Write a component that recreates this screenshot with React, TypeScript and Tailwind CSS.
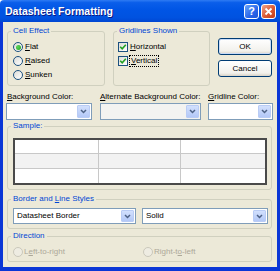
import React from "react";

function Radio({ checked = false, disabled = false }: { checked?: boolean; disabled?: boolean }) {
  return (
    <span
      className={
        disabled
          ? "w-[10px] h-[10px] shrink-0 rounded-full border border-[#CAC8BB] bg-[#EEECE2] flex items-center justify-center"
          : "w-[10px] h-[10px] shrink-0 rounded-full border border-[#1C5180] bg-[linear-gradient(135deg,#DCDCD7,#FFFFFF)] flex items-center justify-center"
      }
    >
      {checked && <span className="w-[5px] h-[5px] rounded-full bg-[radial-gradient(circle_at_35%_35%,#5CD65C,#21A121)]" />}
    </span>
  );
}

function Check() {
  return (
    <span className="w-[10px] h-[10px] shrink-0 border border-[#1C5180] bg-[linear-gradient(135deg,#DCDCD7,#FFFFFF)] flex items-center justify-center">
      <svg viewBox="0 0 8 8" className="w-[8px] h-[8px]">
        <path d="M1.2 3.8 L3.2 5.8 L6.8 1.8" fill="none" stroke="#21A121" strokeWidth="1.6" />
      </svg>
    </span>
  );
}

function Arrow() {
  return (
    <span className="w-[13px] self-stretch m-[1px] rounded-[1px] border border-[#B9CCF5] bg-[linear-gradient(#D2E0FD,#B3C8F7)] flex items-center justify-center">
      <svg viewBox="0 0 7 5" className="w-[7px] h-[5px]">
        <path d="M1 1 L3.5 3.5 L6 1" fill="none" stroke="#4D6185" strokeWidth="1.5" />
      </svg>
    </span>
  );
}

function Combo({ className, value, fill = "bg-white" }: { className: string; value?: string; fill?: string }) {
  return (
    <div className={`flex items-stretch border border-[#7F9DB9] ${fill} ${className}`}>
      <span className="flex-1 pl-[3px] flex items-center text-black">{value}</span>
      <Arrow />
    </div>
  );
}

export default function App() {
  return (
    <div className="w-[280px] h-[271px] flex flex-col font-['Liberation_Sans',Arial,sans-serif] text-[8px] leading-[10px] text-black">
      {/* Title bar */}
      <div className="h-[22px] shrink-0 flex items-center pl-[5px] pr-[4px] rounded-t-[4px] bg-[linear-gradient(#2E7BF3_0%,#0A5EEA_12%,#0055E5_45%,#0052E0_80%,#0046D2_100%)]">
        <span className="flex-1 text-white font-bold text-[10.5px] leading-[12px] [text-shadow:1px_1px_#0A1883]">
          Datasheet Formatting
        </span>
        <span className="w-[15px] h-[15px] rounded-[3px] border border-white bg-[linear-gradient(135deg,#6AA5FA,#2966EA_60%,#1F56D8)] flex items-center justify-center text-white font-bold text-[11px] leading-none">
          ?
        </span>
        <span className="ml-[2px] w-[15px] h-[15px] rounded-[3px] border border-white bg-[linear-gradient(135deg,#EFA48C,#DC5A33_55%,#C23C17)] flex items-center justify-center">
          <svg viewBox="0 0 9 9" className="w-[9px] h-[9px]">
            <path d="M1.5 1.5 L7.5 7.5 M7.5 1.5 L1.5 7.5" stroke="white" strokeWidth="1.8" />
          </svg>
        </span>
      </div>

      {/* Body */}
      <div className="flex-1 flex flex-col bg-[#ECE9D8] border-x-[3px] border-b-[4px] border-[#0A36D6] px-[3px]">
        {/* Top row */}
        <div className="flex pt-[4px]">
          <fieldset className="ml-[1px] w-[98px] h-[60px] border border-[#D0D0BF] rounded-[3px] pl-[5px]">
            <legend className="ml-[-2px] px-[2px] text-[#0046D5]">Cell Effect</legend>
            <div className="flex flex-col pt-[4px]">
              <label className="h-[14px] flex items-center gap-[2px]">
                <Radio checked />
                <span>
                  <u>F</u>lat
                </span>
              </label>
              <label className="h-[14px] flex items-center gap-[2px]">
                <Radio />
                <span>
                  <u>R</u>aised
                </span>
              </label>
              <label className="h-[14px] flex items-center gap-[2px]">
                <Radio />
                <span>
                  <u>S</u>unken
                </span>
              </label>
            </div>
          </fieldset>

          <fieldset className="ml-[8px] w-[97px] h-[60px] border border-[#D0D0BF] rounded-[3px] pl-[4px]">
            <legend className="ml-[-1px] px-[2px] text-[#0046D5]">Gridlines Shown</legend>
            <div className="flex flex-col pt-[4px]">
              <label className="h-[14px] flex items-center gap-[2px]">
                <Check />
                <span>
                  <u>H</u>orizontal
                </span>
              </label>
              <label className="h-[14px] flex items-center gap-[1px]">
                <Check />
                <span className="border border-dotted border-black px-[1px]">
                  <u>V</u>ertical
                </span>
              </label>
            </div>
          </fieldset>

          <div className="ml-[8px] flex flex-col gap-[5px] pt-[12px]">
            <button className="w-[54px] h-[17px] rounded-[3px] border border-[#003C74] bg-[linear-gradient(#FFFFFF,#F2F1EC_80%,#D8D2C6)] shadow-[inset_0_0_0_1px_#C9DBF7] text-[8px] leading-none">
              OK
            </button>
            <button className="w-[54px] h-[17px] rounded-[3px] border border-[#003C74] bg-[linear-gradient(#FFFFFF,#F2F1EC_80%,#D8D2C6)] text-[8px] leading-none">
              Cancel
            </button>
          </div>
        </div>

        {/* Colour pickers */}
        <div className="flex mt-[6px]">
          <div className="flex flex-col w-[86px]">
            <span className="pl-[1px]">
              <u>B</u>ackground Color:
            </span>
            <Combo className="mt-[1px] h-[17px]" />
          </div>
          <div className="flex flex-col w-[101px] ml-[8px]">
            <span>
              <u>A</u>lternate Background Color:
            </span>
            <Combo className="mt-[1px] h-[17px]" fill="bg-[#F3F3F1]" />
          </div>
          <div className="flex flex-col w-[65px] ml-[7px]">
            <span>
              <u>G</u>ridline Color:
            </span>
            <Combo className="mt-[1px] h-[17px]" />
          </div>
        </div>

        {/* Sample */}
        <fieldset className="mt-[1px] ml-[1px] w-[265px] h-[69px] border border-[#D0D0BF] rounded-[3px] pl-[5px]">
          <legend className="ml-[-2px] px-[2px] text-[#0046D5]">Sample:</legend>
          <div className="mt-[7px] w-[254px] h-[47px] border-2 border-[#4A4A4A] grid grid-cols-[84px_1fr_84px] grid-rows-3 bg-white">
            <div className="border-r border-b border-[#C8C8C8] bg-white" />
            <div className="border-r border-b border-[#C8C8C8] bg-white" />
            <div className="border-b border-[#C8C8C8] bg-white" />
            <div className="border-r border-b border-[#C8C8C8] bg-[#F2F2F2]" />
            <div className="border-r border-b border-[#C8C8C8] bg-[#F2F2F2]" />
            <div className="border-b border-[#C8C8C8] bg-[#F2F2F2]" />
            <div className="border-r border-[#C8C8C8] bg-white" />
            <div className="border-r border-[#C8C8C8] bg-white" />
            <div className="bg-white" />
          </div>
        </fieldset>

        {/* Border and Line Styles */}
        <fieldset className="mt-[4px] ml-[1px] w-[265px] h-[35px] border border-[#D0D0BF] rounded-[3px] pl-[5px]">
          <legend className="ml-[-2px] px-[2px] text-[#0046D5]">
            Border and <u>L</u>ine Styles
          </legend>
          <div className="flex mt-[4px]">
            <Combo className="w-[123px] h-[16px]" value="Datasheet Border" />
            <Combo className="ml-[6px] w-[126px] h-[16px]" value="Solid" />
          </div>
        </fieldset>

        {/* Direction */}
        <fieldset className="mt-[2px] ml-[1px] w-[265px] h-[31px] border border-[#D0D0BF] rounded-[3px] pl-[5px]">
          <legend className="ml-[-2px] px-[2px] text-[#0046D5]">Direction</legend>
          <div className="flex mt-[6px] text-[#ACA899]">
            <label className="w-[130px] flex items-center gap-[1px]">
              <Radio disabled />
              <span>
                L<u>e</u>ft-to-right
              </span>
            </label>
            <label className="flex items-center gap-[1px]">
              <Radio disabled />
              <span>
                Right-t<u>o</u>-left
              </span>
            </label>
          </div>
        </fieldset>
      </div>
    </div>
  );
}
